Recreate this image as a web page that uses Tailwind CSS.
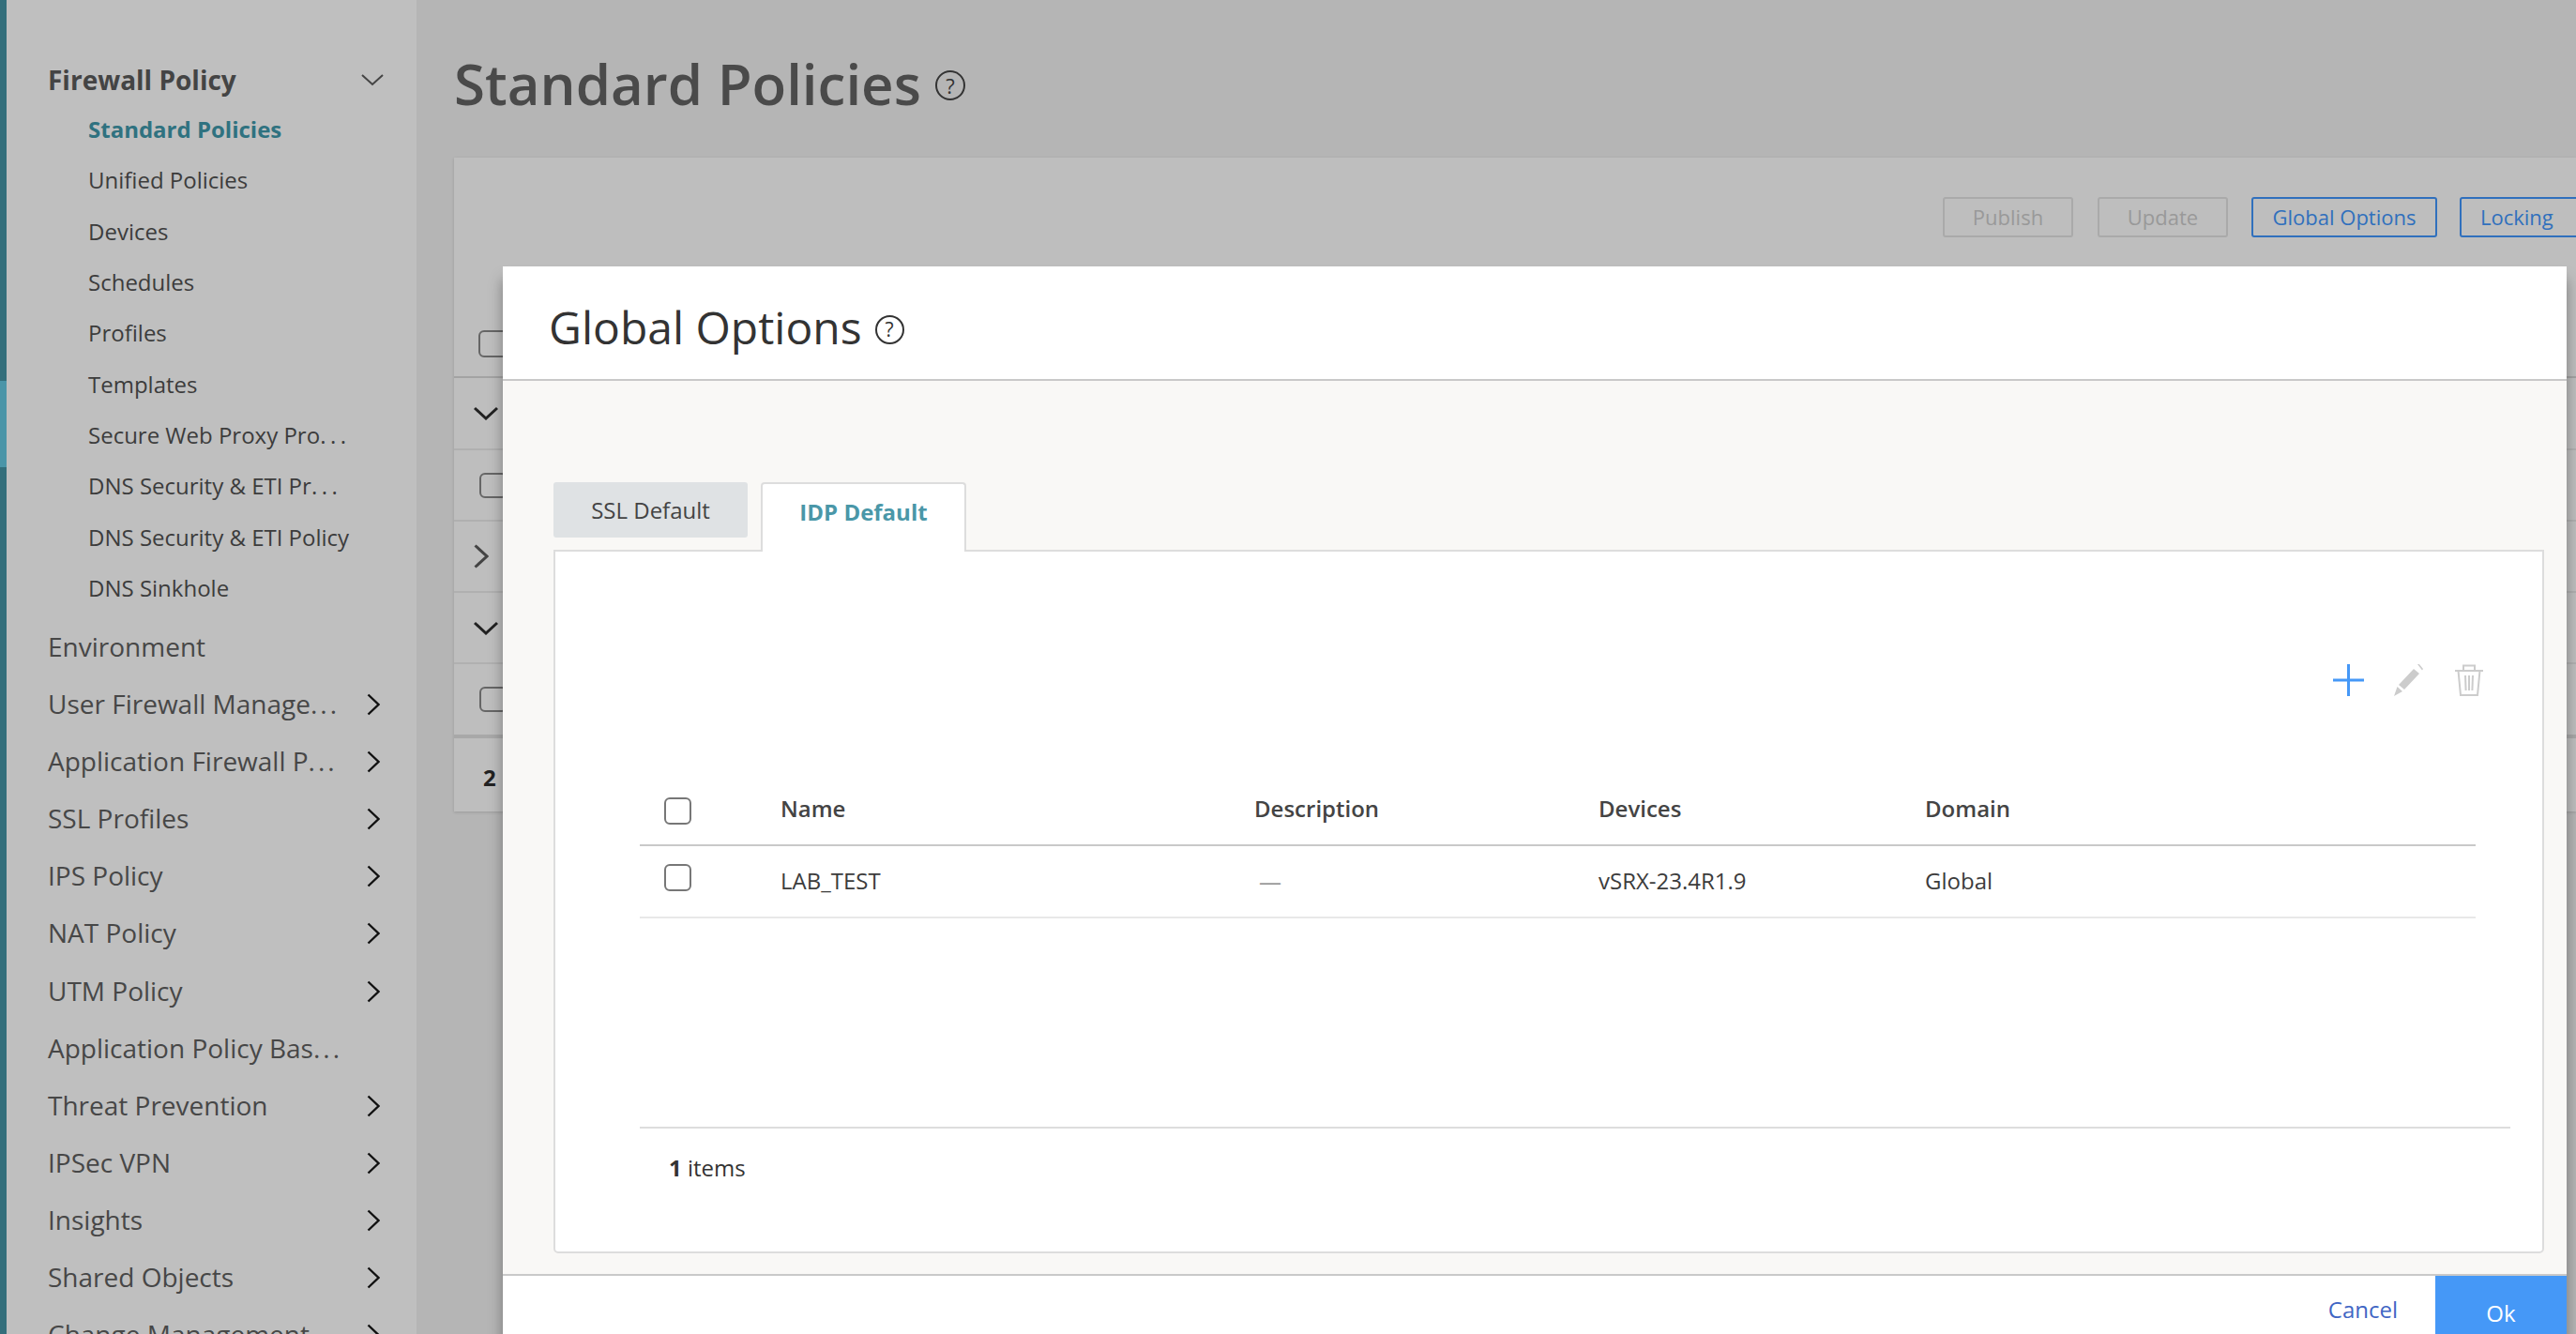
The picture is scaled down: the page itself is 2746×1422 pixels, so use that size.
<!DOCTYPE html>
<html lang="en">
<head>
    <meta charset="UTF-8">
    <title>Global Options</title>
    <script src="https://cdn.jsdelivr.net/npm/@tailwindcss/browser@4"></script>
</head>
<body class="[font-family:'Open_Sans',sans-serif]">
<div class="relative flex h-[1422px] w-[2746px] overflow-hidden bg-[#b5b5b5]">

    <!-- rail -->
    <div class="w-[7px] shrink-0 flex flex-col bg-[#336e7b]">
        <div class="h-[406px]"></div>
        <div class="h-[92px] bg-[#4a95a8]"></div>
    </div>

    <!-- sidebar -->
    <nav class="w-[437px] shrink-0 bg-[#bfbfbf] pt-[59px] pl-[44px] text-[28px] text-[#474747]">
        <div class="flex items-center h-[52px] w-[366px] justify-between">
            <span class="font-bold text-[#444444]">Firewall Policy</span>
            <svg class="w-[24px] h-[14px] mr-[8px]" viewBox="0 0 24 14" fill="none" stroke="#444" stroke-width="2"><path d="M1 2l11 10L23 2"/></svg>
        </div>
        <ul class="text-[24px] text-[#3c3c3c] pl-[43px]">
            <li class="h-[54.3px] flex items-center font-bold text-[#2f7280]">Standard Policies</li>
            <li class="h-[54.3px] flex items-center">Unified Policies</li>
            <li class="h-[54.3px] flex items-center">Devices</li>
            <li class="h-[54.3px] flex items-center">Schedules</li>
            <li class="h-[54.3px] flex items-center">Profiles</li>
            <li class="h-[54.3px] flex items-center">Templates</li>
            <li class="h-[54.3px] flex items-center"><span>Secure Web Proxy Pro<span class="tracking-[4.5px]">...</span></span></li>
            <li class="h-[54.3px] flex items-center"><span>DNS Security &amp; ETI Pr<span class="tracking-[4.5px]">...</span></span></li>
            <li class="h-[54.3px] flex items-center">DNS Security &amp; ETI Policy</li>
            <li class="h-[54.3px] flex items-center">DNS Sinkhole</li>
        </ul>
        <ul class="mt-[4.5px] w-[366px]">
            <li class="h-[61.1px] flex items-center">Environment</li>
            <li class="h-[61.1px] flex items-center justify-between"><span>User Firewall Manage<span class="tracking-[3px]">...</span></span><svg class="w-[14px] h-[24px] mr-[12px] mt-[2px]" viewBox="0 0 14 24" fill="none" stroke="#111" stroke-width="2.4"><path d="M1.5 1.5L12.5 12L1.5 22.5"/></svg></li>
            <li class="h-[61.1px] flex items-center justify-between"><span>Application Firewall P<span class="tracking-[3px]">...</span></span><svg class="w-[14px] h-[24px] mr-[12px] mt-[2px]" viewBox="0 0 14 24" fill="none" stroke="#111" stroke-width="2.4"><path d="M1.5 1.5L12.5 12L1.5 22.5"/></svg></li>
            <li class="h-[61.1px] flex items-center justify-between"><span>SSL Profiles</span><svg class="w-[14px] h-[24px] mr-[12px] mt-[2px]" viewBox="0 0 14 24" fill="none" stroke="#111" stroke-width="2.4"><path d="M1.5 1.5L12.5 12L1.5 22.5"/></svg></li>
            <li class="h-[61.1px] flex items-center justify-between"><span>IPS Policy</span><svg class="w-[14px] h-[24px] mr-[12px] mt-[2px]" viewBox="0 0 14 24" fill="none" stroke="#111" stroke-width="2.4"><path d="M1.5 1.5L12.5 12L1.5 22.5"/></svg></li>
            <li class="h-[61.1px] flex items-center justify-between"><span>NAT Policy</span><svg class="w-[14px] h-[24px] mr-[12px] mt-[2px]" viewBox="0 0 14 24" fill="none" stroke="#111" stroke-width="2.4"><path d="M1.5 1.5L12.5 12L1.5 22.5"/></svg></li>
            <li class="h-[61.1px] flex items-center justify-between"><span>UTM Policy</span><svg class="w-[14px] h-[24px] mr-[12px] mt-[2px]" viewBox="0 0 14 24" fill="none" stroke="#111" stroke-width="2.4"><path d="M1.5 1.5L12.5 12L1.5 22.5"/></svg></li>
            <li class="h-[61.1px] flex items-center"><span>Application Policy Bas<span class="tracking-[3px]">...</span></span></li>
            <li class="h-[61.1px] flex items-center justify-between"><span>Threat Prevention</span><svg class="w-[14px] h-[24px] mr-[12px] mt-[2px]" viewBox="0 0 14 24" fill="none" stroke="#111" stroke-width="2.4"><path d="M1.5 1.5L12.5 12L1.5 22.5"/></svg></li>
            <li class="h-[61.1px] flex items-center justify-between"><span>IPSec VPN</span><svg class="w-[14px] h-[24px] mr-[12px] mt-[2px]" viewBox="0 0 14 24" fill="none" stroke="#111" stroke-width="2.4"><path d="M1.5 1.5L12.5 12L1.5 22.5"/></svg></li>
            <li class="h-[61.1px] flex items-center justify-between"><span>Insights</span><svg class="w-[14px] h-[24px] mr-[12px] mt-[2px]" viewBox="0 0 14 24" fill="none" stroke="#111" stroke-width="2.4"><path d="M1.5 1.5L12.5 12L1.5 22.5"/></svg></li>
            <li class="h-[61.1px] flex items-center justify-between"><span>Shared Objects</span><svg class="w-[14px] h-[24px] mr-[12px] mt-[2px]" viewBox="0 0 14 24" fill="none" stroke="#111" stroke-width="2.4"><path d="M1.5 1.5L12.5 12L1.5 22.5"/></svg></li>
            <li class="h-[61.1px] flex items-center justify-between"><span>Change Management</span><svg class="w-[14px] h-[24px] mr-[12px] mt-[2px]" viewBox="0 0 14 24" fill="none" stroke="#111" stroke-width="2.4"><path d="M1.5 1.5L12.5 12L1.5 22.5"/></svg></li>
        </ul>
    </nav>

    <!-- page behind the dialog -->
    <main class="flex-1 min-w-0 pl-[40px]">
        <div class="h-[168px] flex items-center gap-[15px] pt-[10px]">
            <h1 class="text-[60px] font-semibold text-[#4a4a4a] leading-none">Standard Policies</h1>
            <span class="w-[32px] h-[32px] mt-[4px] rounded-full border-2 border-[#333] flex items-center justify-center text-[22px] text-[#333] leading-none">?</span>
        </div>
        <div class="bg-[#bebebe] h-[697px] shadow-[0_1px_3px_rgba(0,0,0,0.15)]">
            <div class="h-[235px] border-b-2 border-[#a3a3a3] pl-[1587px] pt-[42px]">
                <div class="flex gap-[26px] text-[22px]">
                    <span class="shrink-0 w-[139px] h-[43px] rounded-[3px] border-2 border-[#aaaaaa] text-[#999999] flex items-center justify-center">Publish</span>
                    <span class="shrink-0 w-[139px] h-[43px] -mr-[1px] rounded-[3px] border-2 border-[#aaaaaa] text-[#999999] flex items-center justify-center">Update</span>
                    <span class="shrink-0 w-[198px] h-[43px] -mr-[2px] rounded-[3px] border-2 border-[#3070bd] text-[#3070bd] flex items-center justify-center">Global Options</span>
                    <span class="shrink-0 w-[140px] h-[43px] rounded-[3px] border-2 border-[#3070bd] text-[#3070bd] flex items-center pl-[20px]">Locking</span>
                </div>
            </div>
            <div class="h-[77px] border-b-2 border-[#b0b0b0] pl-[21px] flex items-center">
                <svg class="w-[26px] h-[15px]" viewBox="0 0 26 15" fill="none" stroke="#222" stroke-width="3"><path d="M1 2l12 11L25 2"/></svg>
            </div>
            <div class="h-[76px] border-b-2 border-[#b0b0b0] pl-[27px] flex items-center">
                <span class="w-[30px] h-[27px] rounded-[6px] border-2 border-[#666]"></span>
            </div>
            <div class="h-[76px] border-b-2 border-[#b0b0b0] pl-[21px] flex items-center">
                <svg class="w-[16px] h-[26px]" viewBox="0 0 16 26" fill="none" stroke="#444" stroke-width="3"><path d="M1.5 1.5L14 13L1.5 24.5"/></svg>
            </div>
            <div class="h-[76px] border-b-2 border-[#b0b0b0] pl-[21px] flex items-center">
                <svg class="w-[26px] h-[15px]" viewBox="0 0 26 15" fill="none" stroke="#222" stroke-width="3"><path d="M1 2l12 11L25 2"/></svg>
            </div>
            <div class="h-[79px] border-b-4 border-[#a8a8a8] pl-[27px] flex items-center">
                <span class="w-[30px] h-[27px] rounded-[6px] border-2 border-[#666]"></span>
            </div>
            <div class="h-[78px] pl-[31px] pt-[6px] flex items-center text-[24px] font-bold text-[#222]">2</div>
        </div>
    </main>

    <!-- header checkbox of the table behind, cut by the dialog edge -->
    <span class="absolute left-[510px] top-[352px] w-[34px] h-[29px] rounded-[6px] border-2 border-[#666]"></span>

    <!-- dialog -->
    <div class="absolute left-[536px] top-[284px] w-[2200px] h-[1180px] bg-white flex flex-col shadow-[0_14px_14px_rgba(0,0,0,0.35)]">
        <div class="h-[122px] shrink-0 border-b-2 border-[#c9c9c9] pl-[49px] pt-[10px] flex items-center gap-[14px]">
            <h2 class="text-[48px] text-[#333333] leading-none">Global Options</h2>
            <span class="w-[31px] h-[31px] mt-[5px] rounded-full border-2 border-[#333] flex items-center justify-center text-[21px] text-[#333] leading-none">?</span>
        </div>
        <div class="h-[952px] shrink-0 bg-[#f9f8f6] pl-[54px] pr-[24px] pt-[108px]">
            <div class="flex items-start gap-[14px] text-[24px] h-[72px] relative z-10">
                <div class="w-[207px] h-[59px] bg-[#dfe2e4] rounded-[3px] flex items-center justify-center text-[#444444]">SSL Default</div>
                <div class="w-[219px] h-[74px] bg-white border-2 border-b-0 border-[#dddddd] rounded-t-[4px] flex items-center justify-center font-bold text-[#4a97a8] pb-[13px]">IDP Default</div>
            </div>
            <div class="h-[750px] bg-white border-2 border-[#dddddd] rounded-b-[5px] pl-[90px] pr-[34px] pt-[120px]">
                <div class="h-[34px] flex justify-end items-center gap-[32px] pr-[30px]">
                    <svg class="w-[33px] h-[34px] -mr-[1px] -ml-[1px]" viewBox="0 0 33 34" fill="none" stroke="#4598f7" stroke-width="3"><path d="M16.5 0v34M0 17h33"/></svg>
                    <svg class="w-[33px] h-[34px]" viewBox="0 0 33 34" fill="#cccccc"><path d="M6 22L22 5l6 5-16 17zM4.5 24L10 29 1 34zM26 0l1.5-.5L32 5l-1 1.5z"/></svg>
                    <svg class="w-[30px] h-[34px] -mr-[1px] ml-[1px]" viewBox="0 0 30 34" fill="none" stroke="#cccccc" stroke-width="2"><path d="M0 7h30M9 7V1.5h12V7M3.5 7l2.5 26h18l2.5-26M11 12l.6 16M15 12v16M19 12l-.6 16"/></svg>
                </div>
                <div class="w-[1957px] mt-[82px]">
                    <div class="h-[78px] grid grid-cols-[150px_505px_367px_348px_1fr] items-center border-b-2 border-[#c9c9c9] text-[24px] font-semibold text-[#444444]">
                        <span class="ml-[26px] mt-[4px] w-[29px] h-[29px] rounded-[6px] border-2 border-[#777777]"></span>
                        <span>Name</span>
                        <span>Description</span>
                        <span>Devices</span>
                        <span>Domain</span>
                    </div>
                    <div class="h-[77px] grid grid-cols-[150px_505px_367px_348px_1fr] items-center border-b-2 border-[#e8e8e8] text-[24px] text-[#3c3c3c]">
                        <span class="ml-[26px] -mt-[8px] w-[29px] h-[29px] rounded-[6px] border-2 border-[#777777]"></span>
                        <span class="-mt-[2px]">LAB_TEST</span>
                        <span class="text-[#999999] pl-[5px]">—</span>
                        <span class="-mt-[2px]">vSRX-23.4R1.9</span>
                        <span class="-mt-[2px]">Global</span>
                    </div>
                </div>
                <div class="w-[1994px] mt-[222px] h-[86px] border-t-2 border-[#dddddd] pl-[31px] flex items-center text-[24px] text-[#333333]">
                    <span><b>1</b> items</span>
                </div>
            </div>
        </div>
        <div class="border-t-2 border-[#c9c9c9] flex justify-end flex-1">
            <span class="text-[24px] text-[#3f66c4] mt-[18px] mr-[40px]">Cancel</span>
            <span class="w-[140px] bg-[#4598f7] text-white text-[24px] flex justify-center pt-[22px]">Ok</span>
        </div>
    </div>
</div>
</body>
</html>
